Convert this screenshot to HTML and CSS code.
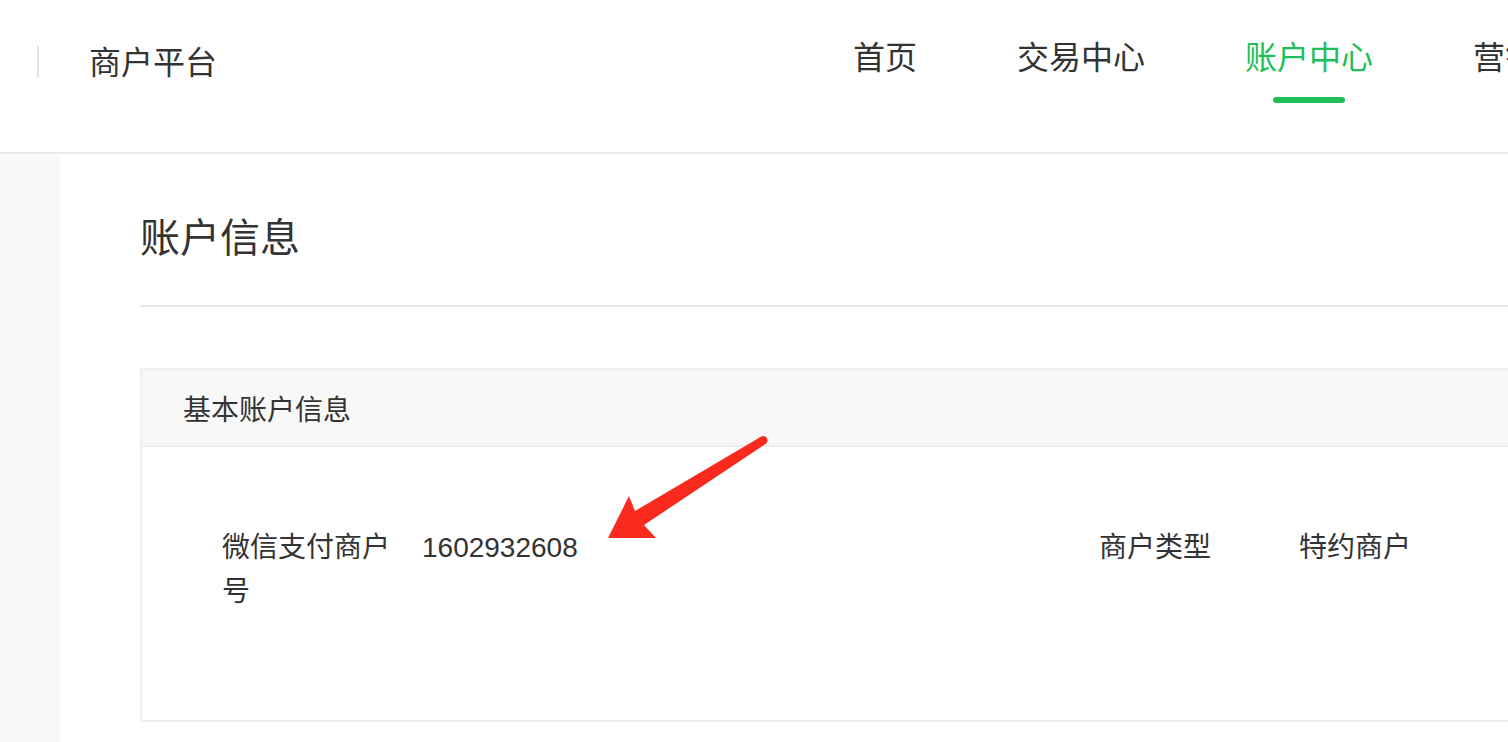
FILE: index.html
```html
<!DOCTYPE html>
<html lang="zh-CN">
<head>
  <meta charset="UTF-8">
  <title>商户平台 - 账户信息</title>
  <link rel="stylesheet" href="styles.css">
</head>
<body>

<header class="topbar">
  <div class="brand">
    <span class="brand-divider"></span>
    <span class="brand-name">商户平台</span>
  </div>
  <nav class="main-nav">
    <a class="nav-item" href="#">首页</a>
    <a class="nav-item" href="#">交易中心</a>
    <a class="nav-item active" href="#">账户中心</a>
    <a class="nav-item" href="#">营销中心</a>
  </nav>
</header>

<div class="layout">
  <aside class="sidebar"></aside>
  <main class="content">
    <h1 class="page-title">账户信息</h1>

    <section class="panel">
      <div class="panel-head">基本账户信息</div>
      <div class="panel-body">
        <div class="info-grid">
          <div class="info-item">
            <span class="info-label">微信支付商户号</span>
            <span class="info-value">1602932608</span>
          </div>
          <div class="info-item">
            <span class="info-label">商户类型</span>
            <span class="info-value">特约商户</span>
          </div>
        </div>
      </div>
    </section>
  </main>
</div>

<!-- 标注箭头 -->
<svg class="annotation" width="175" height="115" viewBox="0 0 175 115">
  <path d="M8 108 L29 66 L35 81 L160.5 7 Q165 4.5 167 8.5 Q168.5 12 165.5 14 L44 95 L56 108 Z" fill="#fb2a1e"/>
</svg>

</body>
</html>
```

FILE: styles.css
```css
body {
  margin: 0;
  font-family: 'Liberation Sans', 'Noto Sans CJK SC', sans-serif;
  color: #333;
  background: #fff;
  overflow: hidden;
  position: relative;
  height: 742px;
}
a {
  text-decoration: none;
}

/* 顶部导航 */
.topbar {
  display: flex;
  height: 152px;
  border-bottom: 2px solid #e7e9ec;
  white-space: nowrap;
  overflow: hidden;
}
.brand {
  display: flex;
  align-items: flex-start;
  padding-top: 43px;
}
.brand-divider {
  width: 2px;
  height: 32px;
  margin-top: 3px;
  margin-left: 37px;
  background: #e3e3e3;
}
.brand-name {
  margin-top: 4px;
  margin-left: 50px;
  font-size: 32px;
  line-height: 32px;
  color: #333;
}
.main-nav {
  display: flex;
  gap: 100px;
  margin-left: 636px;
}
.nav-item {
  display: flex;
  flex-direction: column;
  align-items: center;
  padding-top: 42px;
  font-size: 32px;
  line-height: 32px;
  color: #333;
}
.nav-item.active {
  color: #1fbf58;
}
.nav-item.active::after {
  content: '';
  width: 72px;
  height: 6px;
  margin-top: 23px;
  border-radius: 3px;
  background: #1fbf58;
}

/* 主体 */
.layout {
  display: flex;
  height: 588px;
}
.sidebar {
  width: 60px;
  flex-shrink: 0;
  background: #f8f8f8;
}
.content {
  flex: 1;
  min-width: 0;
  padding-left: 80px;
}
.page-title {
  margin: 0;
  padding: 64px 0 47px;
  font-size: 40px;
  line-height: 40px;
  font-weight: normal;
  color: #333;
  border-bottom: 2px solid #e6e6e6;
}
.panel {
  width: 1850px;
  margin-top: 61px;
  border: 2px solid #efefef;
}
.panel-head {
  display: flex;
  align-items: center;
  height: 75px;
  padding-left: 41px;
  font-size: 28px;
  background: #f8f8f8;
  border-bottom: 2px solid #efefef;
}
.panel-body {
  padding: 79px 0 106px 80px;
}
.info-grid {
  display: grid;
  grid-template-columns: 877px 877px;
}
.info-item {
  display: flex;
  font-size: 28px;
  line-height: 44px;
}
.info-label {
  width: 200px;
  flex-shrink: 0;
  padding-right: 20px;
  box-sizing: border-box;
}

.annotation {
  position: absolute;
  left: 600px;
  top: 430px;
  pointer-events: none;
}
```
